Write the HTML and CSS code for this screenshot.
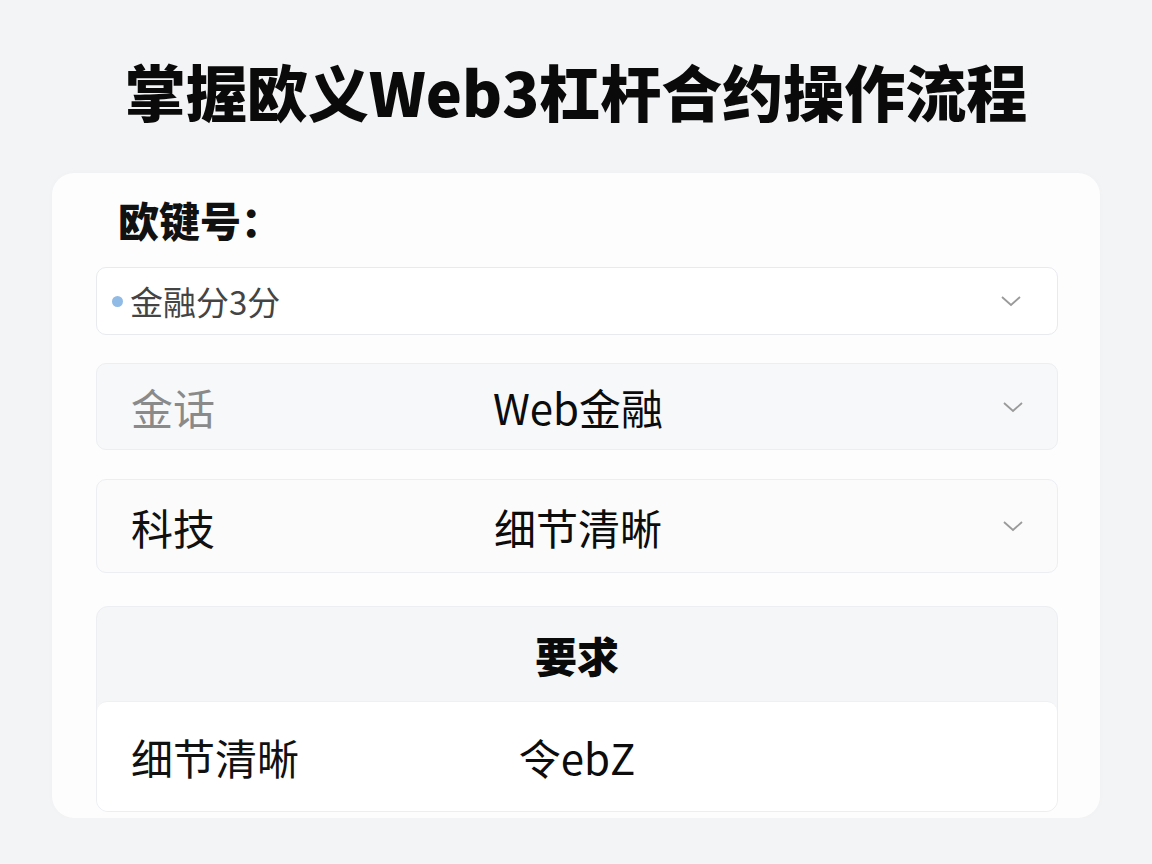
FILE: index.html
```html
<!DOCTYPE html>
<html lang="zh-CN">
<head>
    <meta charset="UTF-8">
    <meta name="viewport" content="width=device-width, initial-scale=1.0">
    <title>掌握欧义Web3杠杆合约操作流程</title>
    <link rel="stylesheet" href="styles.css">
</head>
<body>

    <h1>掌握欧义Web3杠杆合约操作流程</h1>

    <div class="card">
        <h2 class="card-label">欧键号：</h2>

        <div class="select">
            <span class="dot"></span>
            <span class="select-text">金融分3分</span>
            <svg class="chevron" viewBox="0 0 24 24"><path d="M3 8l9 8 9-8"/></svg>
        </div>

        <div class="row row-muted">
            <span class="row-key muted">金话</span>
            <span class="row-value">Web金融</span>
            <svg class="chevron" viewBox="0 0 24 24"><path d="M3 8l9 8 9-8"/></svg>
        </div>

        <div class="row row-tall">
            <span class="row-key">科技</span>
            <span class="row-value">细节清晰</span>
            <svg class="chevron" viewBox="0 0 24 24"><path d="M3 8l9 8 9-8"/></svg>
        </div>

        <div class="section">
            <div class="section-head">要求</div>
            <div class="section-body">
                <span class="row-key">细节清晰</span>
                <span class="row-value">令ebZ</span>
                <span></span>
            </div>
        </div>
    </div>

</body>
</html>
```

FILE: styles.css
```css
body {
    font-family: "Noto Sans CJK SC", "Noto Sans", sans-serif;
    background-color: #f3f4f6;
    margin: 0;
    padding: 0;
    color: #111;
}
h1 {
    margin: 54px 0 0;
    font-size: 61px;
    line-height: 74px;
    font-weight: 900;
    text-align: center;
    color: #0a0a0a;
}
.card {
    margin: 45px 52px 0;
    padding: 20px 42px 6px 44px;
    background-color: #fdfdfe;
    border-radius: 22px;
    box-shadow: 0 0 6px rgba(0, 0, 0, 0.02);
}
.card-label {
    margin: 0 0 22px 22px;
    font-size: 41px;
    line-height: 52px;
    font-weight: 900;
}
.select {
    display: flex;
    align-items: center;
    height: 66px;
    padding: 0 34px 0 15px;
    border: 1px solid #e9eaee;
    border-radius: 10px;
    background-color: #ffffff;
}
.dot {
    width: 11px;
    height: 11px;
    border-radius: 50%;
    background-color: #8fbbe6;
    margin-right: 7px;
}
.select-text {
    flex: 1;
    font-size: 33px;
    color: #444;
}
.chevron {
    width: 24px;
    height: 24px;
    fill: none;
    stroke: #9a9a9a;
    stroke-width: 1.8;
    justify-self: end;
}
.row {
    display: grid;
    grid-template-columns: 1fr auto 1fr;
    align-items: center;
    height: 85px;
    margin-top: 28px;
    padding: 0 32px 0 34px;
    border: 1px solid #eceef1;
    border-radius: 10px;
    background-color: #f7f8fa;
}
.row-tall {
    height: 92px;
    margin-top: 29px;
    background-color: #fbfbfc;
}
.row-key {
    font-size: 42px;
    color: #111;
}
.row-key.muted {
    color: #8a8a8a;
}
.row-value {
    font-size: 42px;
    color: #0c0c0c;
}
.section {
    margin-top: 33px;
    border: 1px solid #eceef1;
    border-radius: 12px;
    background-color: #f5f6f8;
    overflow: hidden;
}
.section-head {
    height: 94px;
    line-height: 96px;
    text-align: center;
    font-size: 42px;
    font-weight: 900;
    color: #0a0a0a;
}
.section-body {
    display: grid;
    grid-template-columns: 1fr auto 1fr;
    align-items: center;
    height: 109px;
    padding: 0 34px;
    background-color: #ffffff;
    border-top: 1px solid #eef0f2;
    border-radius: 10px 10px 0 0;
}
```
